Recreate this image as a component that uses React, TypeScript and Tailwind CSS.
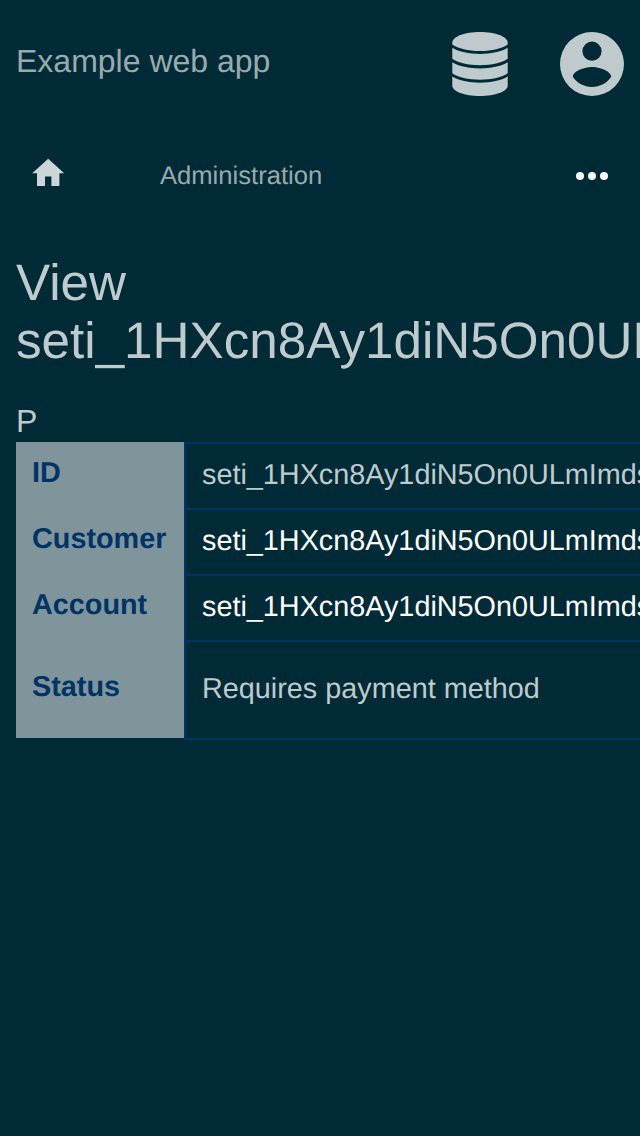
const BODY = "text-[28.8px] leading-[32px] whitespace-nowrap";

const rows = [
  { label: "ID", value: "seti_1HXcn8Ay1diN5On0ULmImdsO", link: false, height: "h-[66px]", pad: "pt-[15px]", labelPad: "pt-[15px]" },
  { label: "Customer", value: "seti_1HXcn8Ay1diN5On0ULmImdsO", link: true, height: "h-[66px]", pad: "pt-[15px]", labelPad: "pt-[15px]" },
  { label: "Account", value: "seti_1HXcn8Ay1diN5On0ULmImdsO", link: true, height: "h-[66px]", pad: "pt-[15px]", labelPad: "pt-[15px]" },
  { label: "Status", value: "Requires payment method", link: false, height: "h-[98px]", pad: "pt-[31px]", labelPad: "pt-[31px]" },
];

function DatabaseIcon() {
  return (
    <svg viewBox="0 0 56 64" className="h-16 w-14" fill="currentColor">
      <path d="M28 0C12.500 0 .3 4.700.3 10.500v2C6 16.500 16 19 28 19s22-2.500 27.700-6.500v-2C55.700 4.700 43.500 0 28 0Z" />
      <path d="M.3 15.700C7 19.700 17 21.900 28 21.900s21-2.200 27.700-6.200v11.100C50 30.800 40 33.200 28 33.200S6 30.800.3 26.800Z" />
      <path d="M.3 30.200C7 34.200 17 36.400 28 36.400s21-2.200 27.700-6.200v11.100C50 45.300 40 47.700 28 47.700S6 45.300.3 41.300Z" />
      <path d="M.3 44.600C7 48.600 17 50.800 28 50.800s21-2.200 27.700-6.200v9.200C55.700 59.400 43.500 64 28 64S.3 59.400.3 53.800Z" />
    </svg>
  );
}

function AccountIcon() {
  return (
    <svg viewBox="2 2 20 20" className="size-16" fill="currentColor">
      <path d="M12,19.2C9.5,19.2 7.29,17.92 6,16C6.03,14 10,12.9 12,12.9C14,12.9 17.97,14 18,16C16.71,17.92 14.5,19.2 12,19.2M12,5A3,3 0 0,1 15,8A3,3 0 0,1 12,11A3,3 0 0,1 9,8A3,3 0 0,1 12,5M12,2A10,10 0 0,0 2,12A10,10 0 0,0 12,22A10,10 0 0,0 22,12C22,6.47 17.5,2 12,2Z" />
    </svg>
  );
}

export default function App() {
  return (
    <div className="h-[1136px] w-[640px] overflow-hidden bg-[#002b36] font-['Liberation_Sans',Arial,sans-serif] text-[#bfcacd] [text-rendering:geometricPrecision]">
      <header className="flex h-32 items-center px-4">
        <h1 className="flex-1 pb-1.5 text-[32px] leading-[36px] text-[#99aaaf]">Example web app</h1>
        <div className="flex gap-[52px]">
          <DatabaseIcon />
          <AccountIcon />
        </div>
      </header>

      <nav className="flex h-24 items-center px-8">
        <svg viewBox="0 0 24 24" className="-ml-[3.2px] mb-[6.4px] size-[38.4px] text-[#ccd5d7]" fill="currentColor">
          <path d="M10,20V14H14V20H19V12H22L12,3L2,12H5V20H10Z" />
        </svg>
        <span className="ml-[92.8px] flex-1 text-[25.6px] leading-[30px] text-[#99aaaf]">Administration</span>
        <svg viewBox="0 0 32 8" className="h-2 w-8" fill="white">
          <circle cx="4" cy="4" r="4" />
          <circle cx="16" cy="4" r="4" />
          <circle cx="28" cy="4" r="4" />
        </svg>
      </nav>

      <main className="pt-[30px] pl-4">
        <h2 className="text-[51.2px] leading-[58px]">
          View
          <br />
          seti_1HXcn8Ay1diN5On0ULmImdsO
        </h2>
        <p className="mt-[33px] h-[39px] text-[32px] leading-[36px]">P</p>
        <dl className="w-[900px]">
          {rows.map((row) => (
            <div key={row.label} className={`group flex ${row.height}`}>
              <dt className={`w-[168px] shrink-0 bg-[#80959b] pl-4 font-bold text-[#003366] ${BODY} ${row.labelPad}`}>{row.label}</dt>
              <dd className={`flex-1 border-t-2 border-l-2 border-[#003366] pl-4 group-last:-mb-0.5 group-last:border-b-2 ${BODY} ${row.pad} ${row.link ? "text-white" : ""}`}>{row.value}</dd>
            </div>
          ))}
        </dl>
      </main>
    </div>
  );
}
